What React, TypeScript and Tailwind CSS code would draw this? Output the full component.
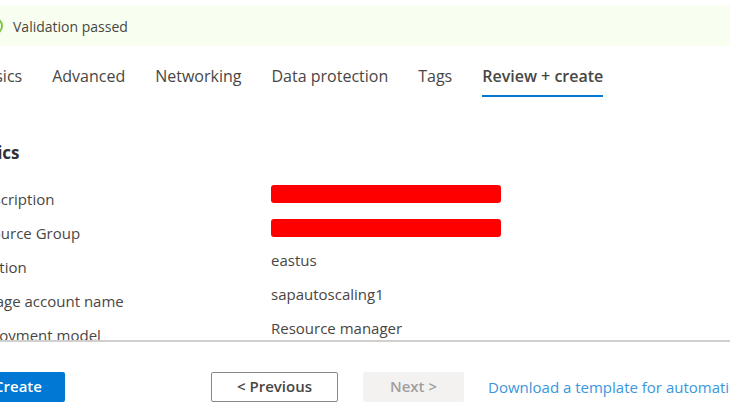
const tabs = ['Basics', 'Advanced', 'Networking', 'Data protection', 'Tags', 'Review + create'];

const details = [
  { label: 'Subscription', value: '' },
  { label: 'Resource Group', value: '' },
  { label: 'Location', value: 'eastus' },
  { label: 'Storage account name', value: 'sapautoscaling1' },
  { label: 'Deployment model', value: 'Resource manager' },
];

function ValidationBanner() {
  return (
    <div role="status" className="mt-[5px] flex h-[41px] items-center gap-[10px] bg-[#f8fff0] pl-[18px] text-sm text-[#484644]">
      <svg viewBox="0 0 18 18" className="size-[18px] shrink-0" fill="none" stroke="#7fc241" strokeWidth="2" aria-hidden="true">
        <circle cx="9" cy="9" r="8" />
        <path d="M5 9.2l2.8 2.8L13 6.8" />
      </svg>
      <span className="pt-[2px]">Validation passed</span>
    </div>
  );
}

function Tabs() {
  return (
    <nav className="mt-4 flex gap-[30px] whitespace-nowrap pl-[9px] text-base">
      {tabs.map((tab) => (
        <a
          key={tab}
          href="#"
          className={
            tab === 'Review + create'
              ? 'h-[35px] border-b-2 border-[#0078d4] pt-[3px] font-semibold leading-[22px] text-[#484644]'
              : 'h-[35px] pt-[3px] leading-[22px] text-[#484644]'
          }
        >
          {tab}
        </a>
      ))}
    </nav>
  );
}

export default function App() {
  return (
    <div className="flex h-screen flex-col overflow-hidden bg-white font-['Open_Sans',sans-serif] text-[15px] text-[#484644]">
      {/* the blade is scrolled sideways, so its left edge is out of view */}
      <main className="-ml-[33px] min-h-0 flex-1 overflow-hidden">
        <ValidationBanner />
        <Tabs />
        <h2 className="mt-[45px] text-[17px] font-bold leading-[22px] text-[#323130]">Basics</h2>
        <dl className="mt-[17px]">
          {details.map(({ label, value }) => (
            <div key={label} className="flex h-[34px] items-start leading-[22px]">
              <dt className="w-[304px] shrink-0 pt-[7px]">{label}</dt>
              <dd>
                {value || <span className="mt-1 block h-[18px] w-[230px] rounded-[3px] bg-[#ff0000]" aria-label="Hidden" />}
              </dd>
            </div>
          ))}
        </dl>
      </main>

      <footer className="-ml-[33px] flex h-[70px] shrink-0 items-start whitespace-nowrap border-t-2 border-[#d2d0ce] pt-[30px] leading-[22px]">
        <button type="button" className="h-[30px] w-[98px] shrink-0 rounded-xs bg-[#0078d4] pb-0.5 pl-1 font-semibold text-white">
          Create
        </button>
        <button
          type="button"
          className="ml-[146px] h-[30px] w-[127px] shrink-0 rounded-xs border border-[#8a8886] pb-0.5 font-semibold text-[#484644]"
        >
          &lt; Previous
        </button>
        <button
          type="button"
          disabled
          className="ml-[25px] h-[30px] w-[101px] shrink-0 rounded-xs bg-[#f3f2f1] pb-0.5 font-semibold text-[#a19f9d]"
        >
          Next &gt;
        </button>
        <a href="#" className="ml-6 shrink-0 pt-1 text-[#3a96dd]">
          Download a template for automation
        </a>
      </footer>
    </div>
  );
}
